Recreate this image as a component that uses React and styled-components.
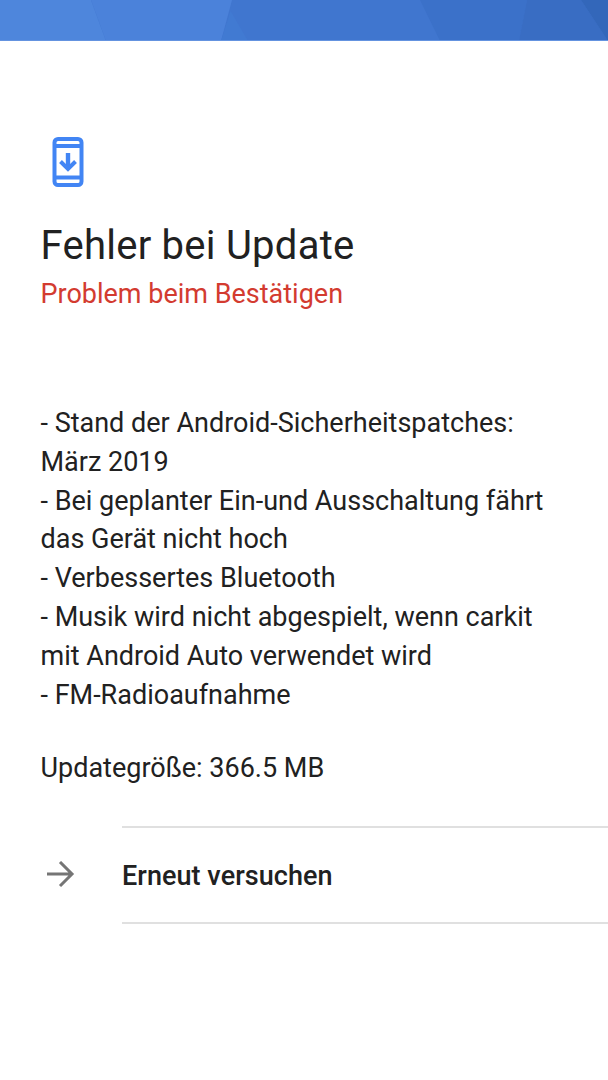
import React from 'react'
import styled, { createGlobalStyle } from 'styled-components'

const GlobalStyle = createGlobalStyle`
  html, body {
    margin: 0;
    padding: 0;
    background: #fff;
  }
  body {
    font-family: Roboto, "Liberation Sans", sans-serif;
    color: #212121;
  }
`

const Page = styled.div`
  width: 608px;
  height: 1080px;
  overflow: hidden;
  background: #fff;
`

const Banner = styled.header`
  height: 41px;
  overflow: hidden;
  svg {
    display: block;
  }
`

const Content = styled.main`
  padding: 96px 0 0 40.5px;
`

const PhoneIcon = styled.svg`
  display: block;
  width: 32px;
  height: 50px;
  margin-left: 11px;
`

const Title = styled.h1`
  margin: 36px 0 0;
  font-size: 40px;
  line-height: 46px;
  font-weight: 400;
  letter-spacing: 0.25px;
  color: #212121;
`

const Subtitle = styled.h2`
  margin: 7px 0 0;
  font-size: 27px;
  line-height: 36px;
  font-weight: 400;
  color: #d33b30;
`

const Notes = styled.div`
  margin-top: 92px;
  padding-right: 40px;
  font-size: 27px;
  line-height: 38.8px;
`

const Size = styled.p`
  margin: 35px 0 0;
  font-size: 27px;
  line-height: 38.8px;
`

const RetryRow = styled.div`
  display: flex;
  align-items: center;
  margin: 38px 0 0 -40.5px;
`

const ArrowSlot = styled.div`
  width: 122px;
  flex: none;
  display: flex;
  padding-left: 46px;
  box-sizing: border-box;
  svg {
    display: block;
  }
`

const RetryLabel = styled.div`
  flex: 1;
  height: 92px;
  display: flex;
  align-items: center;
  padding-top: 2px;
  border-top: 2px solid #e0e0e0;
  border-bottom: 2px solid #e0e0e0;
  font-size: 27px;
  font-weight: 500;
  letter-spacing: 0.05px;
  color: #212121;
`

const notes = [
  '- Stand der Android-Sicherheitspatches:',
  'März 2019',
  '- Bei geplanter Ein-und Ausschaltung fährt',
  'das Gerät nicht hoch',
  '- Verbessertes Bluetooth',
  '- Musik wird nicht abgespielt, wenn carkit',
  'mit Android Auto verwendet wird',
  '- FM-Radioaufnahme',
]

export default function App() {
  return (
    <Page>
      <GlobalStyle />
      <Banner>
        <svg width="608" height="41" viewBox="0 0 608 41">
          <rect width="608" height="41" fill="#4076cf" />
          <polygon points="0,0 91,0 106,41 0,41" fill="#4e86dc" />
          <polygon points="91,0 232,0 221,41 106,41" fill="#4b82da" />
          <polygon points="230.6,11 221,41 248,41" fill="#417ad2" />
          <polygon points="420,0 527,0 519,41 440,41" fill="#3b71c9" />
          <polygon points="527,0 581,0 608,41 519,41" fill="#396dc3" />
          <polygon points="581,0 608,0 608,41" fill="#3367ba" />
          <rect y="40" width="608" height="1" fill="#6493e0" />
        </svg>
      </Banner>
      <Content>
        <PhoneIcon viewBox="0 0 32 50" fill="none">
          <rect x="2.5" y="2" width="27" height="46" rx="3.5" stroke="#4285f4" strokeWidth="4" />
          <path d="M3 9h26M3 40.5h26" stroke="#4285f4" strokeWidth="4.2" />
          <path d="M16 16v15" stroke="#4285f4" strokeWidth="4.4" />
          <path d="M8.5 24.5 16 32l7.5-7.5" stroke="#4285f4" strokeWidth="4" />
        </PhoneIcon>
        <Title>Fehler bei Update</Title>
        <Subtitle>Problem beim Bestätigen</Subtitle>
        <Notes>
          {notes.map((line) => (
            <div key={line}>{line}</div>
          ))}
        </Notes>
        <Size>Updategröße: 366.5 MB</Size>
        <RetryRow>
          <ArrowSlot>
            <svg width="30" height="28" viewBox="0 0 30 28" fill="none">
              <path d="M1 13h25M14 1l12 12-12 12" stroke="#757575" strokeWidth="3" />
            </svg>
          </ArrowSlot>
          <RetryLabel>Erneut versuchen</RetryLabel>
        </RetryRow>
      </Content>
    </Page>
  )
}
